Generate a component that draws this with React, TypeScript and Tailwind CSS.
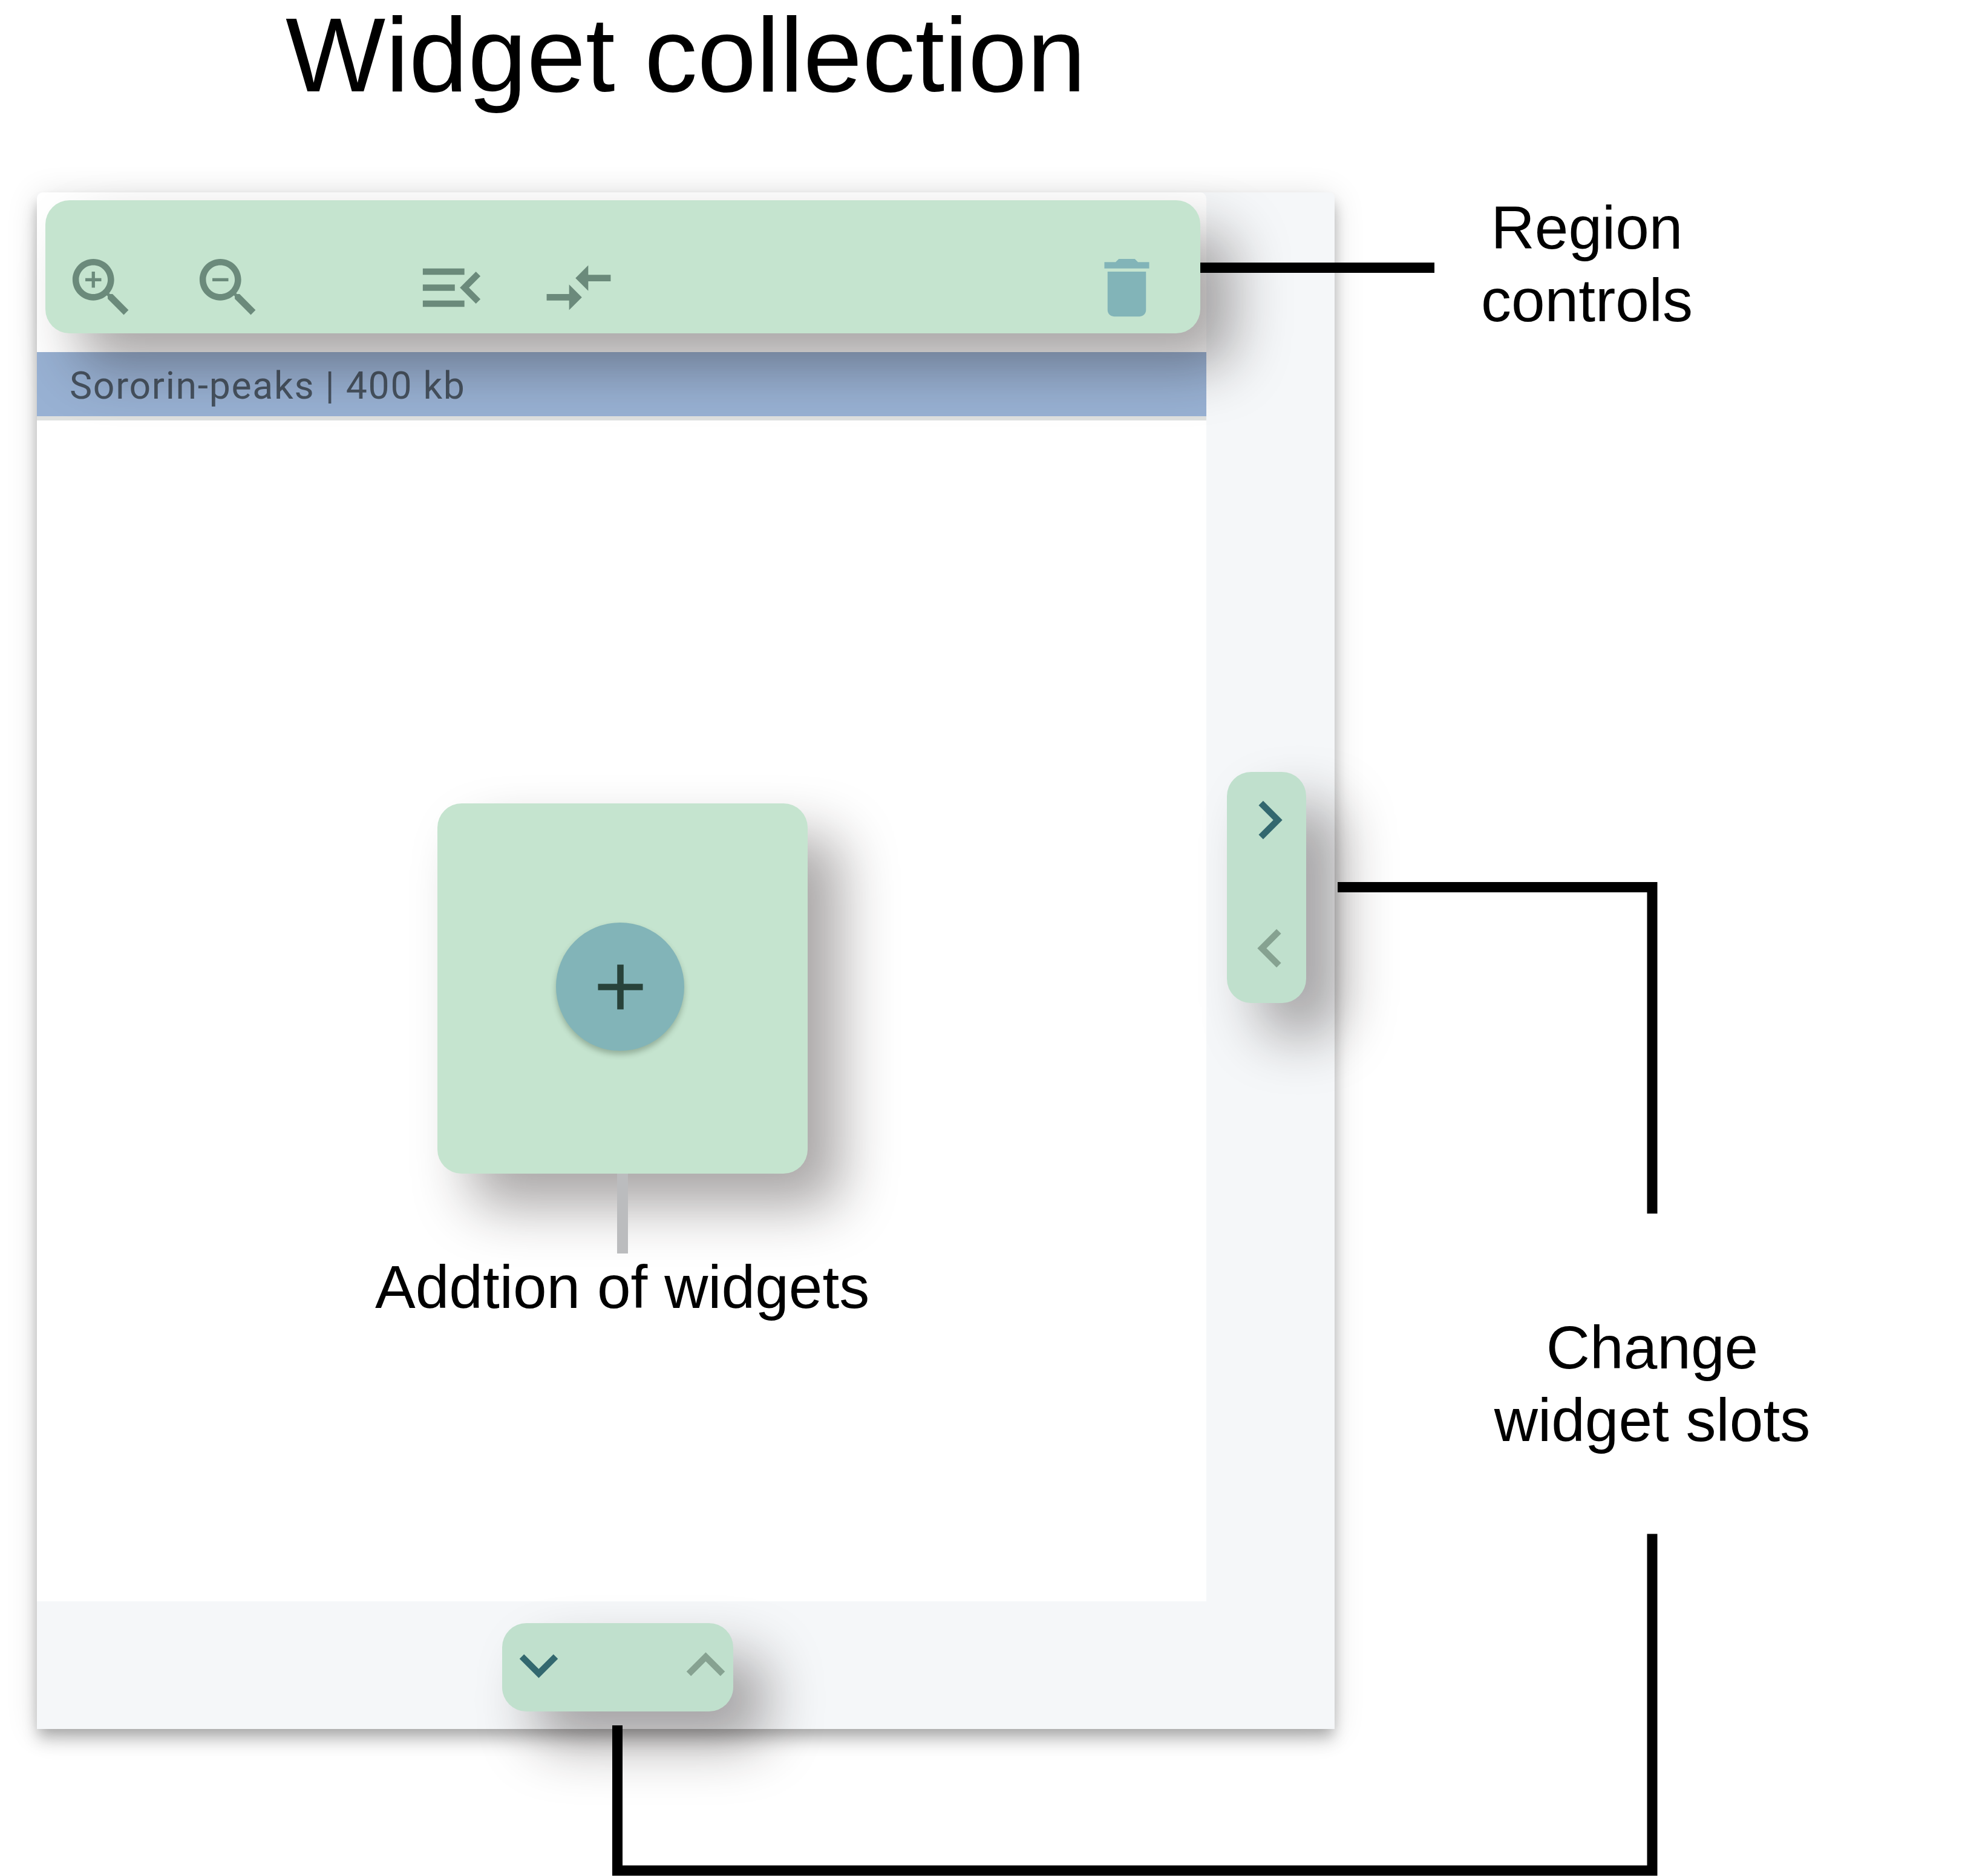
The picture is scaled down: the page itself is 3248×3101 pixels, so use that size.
import React from "react";

const paths = {
  zoomIn:
    "M15.5 14h-.79l-.28-.27C15.41 12.59 16 11.11 16 9.5 16 5.91 13.09 3 9.5 3S3 5.91 3 9.5 5.91 16 9.5 16c1.61 0 3.09-.59 4.23-1.57l.27.28v.79l5 4.99L20.49 19l-4.99-5zm-6 0C7.01 14 5 11.99 5 9.5S7.01 5 9.5 5 14 7.01 14 9.5 11.99 14 9.5 14zm2.5-4h-2v2H9v-2H7V9h2V7h1v2h2v1z",
  zoomOut:
    "M15.5 14h-.79l-.28-.27C15.41 12.59 16 11.11 16 9.5 16 5.91 13.09 3 9.5 3S3 5.91 3 9.5 5.91 16 9.5 16c1.61 0 3.09-.59 4.23-1.57l.27.28v.79l5 4.99L20.49 19l-4.99-5zm-6 0C7.01 14 5 11.99 5 9.5S7.01 5 9.5 5 14 7.01 14 9.5 11.99 14 9.5 14zM7 9h5v1H7z",
  menuOpen:
    "M3 18h13v-2H3v2zm0-5h10v-2H3v2zm0-7v2h13V6H3zm18 9.59L17.42 12 21 8.41 19.59 7l-5 5 5 5L21 15.59z",
  compare:
    "M9.01 14H2v2h7.01v3L13 15l-3.99-4v3zm5.98-1v-3H22V8h-7.01V5L11 9l3.99 4z",
  trash:
    "M6 19c0 1.1.9 2 2 2h8c1.1 0 2-.9 2-2V7H6v12zM19 4h-3.5l-1-1h-5l-1 1H5v2h14V4z",
  add: "M19 13h-6v6h-2v-6H5v-2h6V5h2v6h6v2z",
  right: "M10 6L8.59 7.41 13.17 12l-4.58 4.59L10 18l6-6z",
  left: "M15.41 7.41L14 6l-6 6 6 6 1.41-1.41L10.83 12z",
  down: "M16.59 8.59L12 13.17 7.41 8.59 6 10l6 6 6-6z",
  up: "M12 8l-6 6 1.41 1.41L12 10.83l4.59 4.58L18 14z",
};

function Icon({ name, className = "" }: { name: keyof typeof paths; className?: string }) {
  return (
    <svg viewBox="0 0 24 24" fill="currentColor" className={`size-[127px] shrink-0 ${className}`}>
      <path d={paths[name]} />
    </svg>
  );
}

const highlight =
  "relative z-10 rounded-[40px] shadow-[54px_54px_92px_rgba(30,20,20,0.38)]";

function Toolbar() {
  return (
    <div className="h-[264px] pt-[13px] pl-[14px]">
      <div className={`${highlight} flex h-[220px] w-[1909px] bg-[#c5e4cf] pt-[81px] pl-[29px] text-[#6b8a7b]`}>
        <Icon name="zoomIn" />
        <Icon name="zoomOut" className="ml-[83px]" />
        <Icon name="menuOpen" className="ml-[242px]" />
        <Icon name="compare" className="ml-[83px]" />
        <Icon name="trash" className="ml-[779px] text-[#82b4b8]" />
      </div>
    </div>
  );
}

function Region() {
  return (
    <div className="h-[2329px] w-[1933px] rounded-t-[10px] bg-white">
      <Toolbar />
      <div className="h-[113px] border-b-[7px] border-[#dee0df] bg-[#98b1d3] pl-[54px] font-[Roboto,sans-serif] text-[62.5px] leading-[112px] tracking-[1.7px] whitespace-nowrap text-[#46525f]">
        Sororin-peaks | 400 kb
      </div>
      <div className="flex flex-col pt-[633px]">
        <div className={`${highlight} ml-[662px] flex size-[612px] justify-center bg-[#c5e4cf] pt-[197px] pr-[8px]`}>
          <div className="flex size-[212px] items-center justify-center rounded-full bg-[#82b4b8] text-[#28423a] shadow-[0_6px_10px_rgba(40,60,40,0.3)]">
            <Icon name="add" />
          </div>
        </div>
        <div className="relative z-10 ml-[959px] h-[132px] w-[18px] bg-[#bbbcbe]" />
        <div className="relative z-10 ml-[559px] text-[100px] leading-[110px] whitespace-nowrap">Addtion of widgets</div>
      </div>
    </div>
  );
}

function Panel() {
  return (
    <div className="h-[2540px] w-[2145px] rounded-t-[8px] bg-[#f5f7f9] shadow-[0_11px_21px_-5px_rgba(0,0,0,0.2),0_21px_27px_rgba(0,0,0,0.14),0_5px_53px_rgba(0,0,0,0.12)]">
      <div className="flex">
        <Region />
        <div className="w-[212px] pt-[958px] pl-[34px]">
          <div className={`${highlight} flex h-[382px] w-[131px] flex-col gap-[85px] bg-[#c0e0cd] pt-[16px] pl-[7px]`}>
            <Icon name="right" className="text-[#33686f]" />
            <Icon name="left" className="ml-px text-[#86a291]" />
          </div>
        </div>
      </div>
      <div className="pt-[36px] pl-[769px]">
        <div className={`${highlight} flex h-[146px] w-[382px] gap-[149px] bg-[#c0e0cd] pt-[6px]`}>
          <Icon name="down" className="-ml-[3px] text-[#33686f]" />
          <Icon name="up" className="text-[#86a291]" />
        </div>
      </div>
    </div>
  );
}

export default function App() {
  return (
    <div className="relative flex h-[3101px] w-[3248px] overflow-hidden bg-white pl-[61px] font-['Liberation_Sans',Arial,sans-serif] text-black">
      <div className="w-[2145px] shrink-0">
        <h1 className="h-[318px] pt-[3px] pl-[411px] text-[175px] leading-[175px] whitespace-nowrap">Widget collection</h1>
        <Panel />
      </div>
      <div className="pt-[316px]">
        <p className="ml-[237px] w-[360px] text-center text-[100px] leading-[120px]">
          Region
          <br />
          controls
        </p>
        <p className="mt-[1611px] ml-[225px] w-[600px] text-center text-[100px] leading-[120px]">
          Change
          <br />
          widget slots
        </p>
      </div>
      {/* Callout lines over the panel */}
      <svg
        viewBox="0 0 3248 3101"
        className="pointer-events-none absolute inset-0 z-20 h-[3101px] w-[3248px] fill-none stroke-black"
        strokeWidth="17"
      >
        <path d="M1984 442.5H2371" />
        <path d="M2211 1466.5H2731V2006" />
        <path d="M2731 2535.5V3092H1020.5V2852" />
      </svg>
    </div>
  );
}
